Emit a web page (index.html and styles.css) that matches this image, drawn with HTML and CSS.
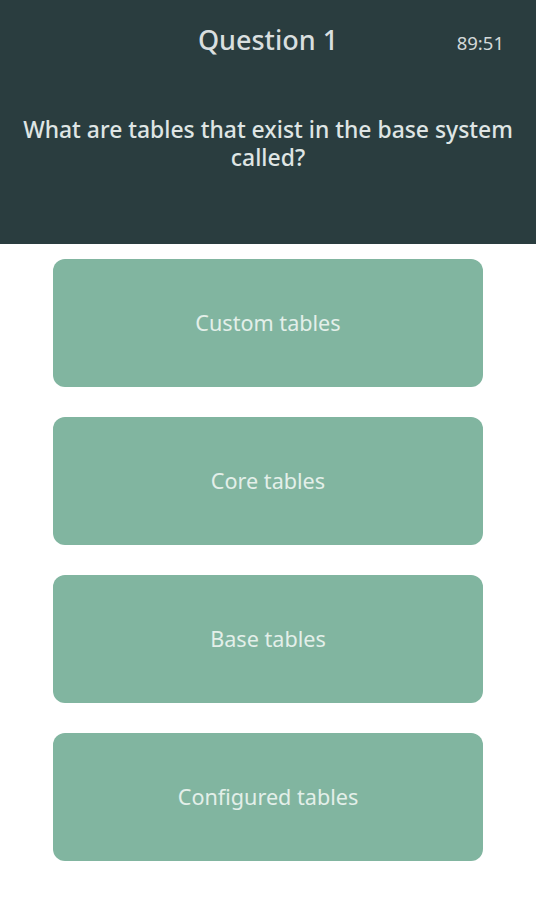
FILE: index.html
```html
<!DOCTYPE html>
<html>
<head>
<meta charset="utf-8">
<link rel="stylesheet" href="styles.css">
</head>
<body>
<div class="header">
  <div class="title-row">
    <div></div>
    <div class="title">Question 1</div>
    <div class="timer">89:51</div>
  </div>
  <div class="question">What are tables that exist in the base system called?</div>
</div>
<div class="answers">
  <div class="answer">Custom tables</div>
  <div class="answer">Core tables</div>
  <div class="answer">Base tables</div>
  <div class="answer">Configured tables</div>
</div>
</body>
</html>
```
FILE: styles.css
```css
html, body {
  margin: 0;
  padding: 0;
  background: #ffffff;
  font-family: "Noto Sans", "Open Sans", sans-serif;
}
.header {
  background: #2a3d3f;
  height: 244px;
  box-sizing: border-box;
  padding-top: 22px;
}
.title-row {
  display: grid;
  grid-template-columns: 1fr auto 1fr;
  align-items: center;
  height: 36px;
}
.title {
  font-size: 27px;
  line-height: 36px;
  color: #d9dfdf;
  font-weight: 500;
}
.timer {
  justify-self: end;
  padding-right: 32px;
  font-size: 18.5px;
  color: #d3d9d9;
  padding-top: 4px;
}
.question {
  margin-top: 58px;
  padding: 0 12px;
  text-align: center;
  font-size: 22.9px;
  line-height: 28px;
  font-weight: 500;
  color: #dfe5e4;
}
.answers {
  display: flex;
  flex-direction: column;
  align-items: center;
  gap: 30px;
  padding-top: 15px;
}
.answer {
  width: 430px;
  height: 128px;
  border-radius: 12px;
  background: #81b5a0;
  color: #e3efe9;
  font-size: 21.6px;
  display: flex;
  align-items: center;
  justify-content: center;
  padding-bottom: 2px;
  box-sizing: border-box;
}
```
